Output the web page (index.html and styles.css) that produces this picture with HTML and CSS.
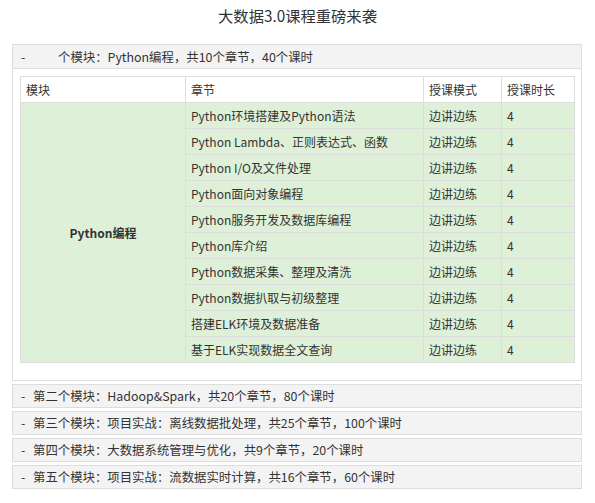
FILE: index.html
```html
<!DOCTYPE html>
<html lang="zh">
<head>
<meta charset="utf-8">
<title>大数据3.0课程重磅来袭</title>
<link rel="stylesheet" href="styles.css">
</head>
<body>
<h1 class="title">大数据3.0课程重磅来袭</h1>
<div class="accordion">
  <div class="panel open">
    <div class="panel-head"><span class="dash">-</span><span class="gap"></span>个模块：Python编程，共10个章节，40个课时</div>
    <div class="panel-body">
      <table class="course">
        <thead>
          <tr><th class="c1">模块</th><th class="c2">章节</th><th class="c3">授课模式</th><th class="c4">授课时长</th></tr>
        </thead>
        <tbody>
          <tr><td class="mod" rowspan="10">Python编程</td><td>Python环境搭建及Python语法</td><td>边讲边练</td><td>4</td></tr>
          <tr><td>Python Lambda、正则表达式、函数</td><td>边讲边练</td><td>4</td></tr>
          <tr><td>Python I/O及文件处理</td><td>边讲边练</td><td>4</td></tr>
          <tr><td>Python面向对象编程</td><td>边讲边练</td><td>4</td></tr>
          <tr><td>Python服务开发及数据库编程</td><td>边讲边练</td><td>4</td></tr>
          <tr><td>Python库介绍</td><td>边讲边练</td><td>4</td></tr>
          <tr><td>Python数据采集、整理及清洗</td><td>边讲边练</td><td>4</td></tr>
          <tr><td>Python数据扒取与初级整理</td><td>边讲边练</td><td>4</td></tr>
          <tr><td>搭建ELK环境及数据准备</td><td>边讲边练</td><td>4</td></tr>
          <tr><td>基于ELK实现数据全文查询</td><td>边讲边练</td><td>4</td></tr>
        </tbody>
      </table>
    </div>
  </div>
  <div class="panel"><div class="panel-head"><span class="dash">-</span>第二个模块：Hadoop&amp;Spark，共20个章节，80个课时</div></div>
  <div class="panel"><div class="panel-head"><span class="dash">-</span>第三个模块：项目实战：离线数据批处理，共25个章节，100个课时</div></div>
  <div class="panel"><div class="panel-head"><span class="dash">-</span>第四个模块：大数据系统管理与优化，共9个章节，20个课时</div></div>
  <div class="panel"><div class="panel-head"><span class="dash">-</span>第五个模块：项目实战：流数据实时计算，共16个章节，60个课时</div></div>
</div>
</body>
</html>
```
FILE: styles.css
```css
* { box-sizing: border-box; }
html, body { margin: 0; padding: 0; background: #fff; }
body {
  font-family: "Noto Sans CJK SC", "Noto Sans", sans-serif;
  color: #333;
  font-size: 12px;
}
.title {
  margin: 0;
  height: 44px;
  padding-top: 1px;
  line-height: 28px;
  font-size: 15.3px;
  font-weight: normal;
  text-align: center;
  color: #333;
}
.accordion {
  margin-left: 12px;
  width: 570px;
  display: flex;
  flex-direction: column;
  gap: 3px;
}
.panel {
  border: 1px solid #ddd;
  background: #fff;
}
.panel-head {
  height: 22px;
  line-height: 22px;
  background: #f3f3f3;
  font-size: 12.4px;
  padding-left: 8px;
  white-space: nowrap;
}
.panel.open .panel-head {
  height: 24px;
  line-height: 24px;
  border-bottom: 1px solid #ddd;
}
.dash {
  display: inline-block;
  width: 12px;
}
.gap {
  display: inline-block;
  width: 25px;
}
.panel-body {
  padding: 7px 6px 17px 7px;
}
.course {
  width: 554px;
  border-collapse: collapse;
  table-layout: fixed;
  font-size: 12px;
}
.course th, .course td {
  border: 1px solid #ddd;
  height: 26px;
  padding: 0 5px;
  text-align: left;
  font-weight: normal;
  white-space: nowrap;
}
.course th { background: #fff; }
.course td { background: #dff0d8; }
.course .c1 { width: 165px; }
.course .c2 { width: 238px; }
.course .c3 { width: 78px; }
.course .c4 { width: 73px; }
.course td.mod {
  text-align: center;
  font-weight: bold;
  vertical-align: middle;
}
```
